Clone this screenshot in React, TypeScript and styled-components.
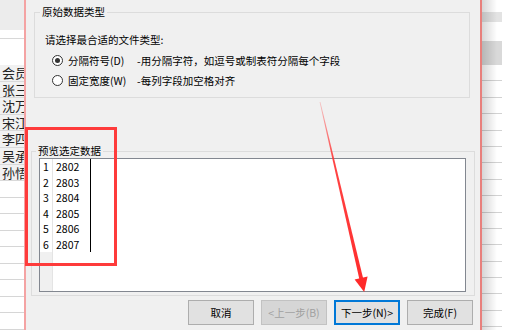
import styled, { createGlobalStyle, css } from "styled-components";

const GlobalStyle = createGlobalStyle`
  html, body {
    margin: 0;
    padding: 0;
    background: #ffffff;
  }
`;

const Screen = styled.div`
  position: relative;
  display: flex;
  width: 508px;
  height: 330px;
  overflow: hidden;
  background: #ffffff;
  font-family: "Noto Sans CJK SC", "Noto Sans", sans-serif;
  color: #000;
`;

/* spreadsheet peeking out on the left */
const LeftSheet = styled.div`
  flex: none;
  width: 24px;
  display: flex;
  flex-direction: column;
  overflow: hidden;
`;

const Band = styled.div<{ $h: number; $bg?: string; $line?: boolean }>`
  flex: none;
  box-sizing: border-box;
  height: ${(p) => p.$h}px;
  background: ${(p) => p.$bg ?? "#ffffff"};
  border-bottom: ${(p) => (p.$line ? "1px solid #d8d8d8" : "none")};
`;

const NameCell = styled.div`
  flex: none;
  box-sizing: border-box;
  height: 16.6px;
  padding-left: 2px;
  overflow: hidden;
  background: #f1f1f1;
  border-bottom: 1px solid #d9d9d9;
  font-size: 13px;
  line-height: 16px;
  white-space: nowrap;
  color: #222;
`;

const SheetLine = styled.div`
  flex: none;
  box-sizing: border-box;
  height: 16.5px;
  border-bottom: 1px solid #d6d6d6;
`;

/* the wizard dialog */
const Dialog = styled.div`
  flex: none;
  box-sizing: border-box;
  width: 458px;
  padding-top: 6px;
  display: flex;
  flex-direction: column;
  background: #f0f0f0;
  border-left: 2px solid #f4a3a3;
  border-right: 2px solid #e8807c;
  font-size: 10.5px;
`;

const GroupBox = styled.fieldset<{ $margin: string; $pad: string }>`
  margin: ${(p) => p.$margin};
  padding: ${(p) => p.$pad};
  min-width: 0;
  border: 1px solid #dcdcdc;
`;

const GroupTitle = styled.legend<{ $shift: number }>`
  margin-left: ${(p) => p.$shift}px;
  padding: 0 2px;
  font-size: 10.5px;
  line-height: 12px;
`;

const Intro = styled.div`
  height: 20px;
  line-height: 20px;
`;

const OptionRow = styled.label`
  display: grid;
  grid-template-columns: 16px 69px auto;
  align-items: center;
  height: 20px;
  padding-left: 7px;
  white-space: nowrap;
`;

const Radio = styled.span<{ $checked?: boolean }>`
  box-sizing: border-box;
  width: 11px;
  height: 11px;
  border-radius: 50%;
  border: 1px solid #333;
  background: #fff;
  display: flex;
  align-items: center;
  justify-content: center;
  &::after {
    content: "";
    width: 5px;
    height: 5px;
    border-radius: 50%;
    background: ${(p) => (p.$checked ? "#333" : "transparent")};
  }
`;

const Preview = styled.div`
  box-sizing: border-box;
  height: 134px;
  display: flex;
  align-items: stretch;
  background: #ffffff;
  border: 1px solid #828790;
`;

const Gutter = styled.div`
  box-sizing: border-box;
  width: 13px;
  display: flex;
  flex-direction: column;
  background: #f0f0f0;
  border-right: 1px solid #e4e4e4;
`;

const LineNo = styled.div`
  height: 15.5px;
  line-height: 15.5px;
  text-align: center;
  background: #ffffff;
`;

const DataCol = styled.div`
  box-sizing: border-box;
  align-self: flex-start;
  width: 38px;
  padding-left: 3px;
  border-right: 1px solid #000;
`;

const DataCell = styled.div`
  height: 15.5px;
  line-height: 15.5px;
`;

const ButtonBar = styled.div`
  display: flex;
  justify-content: flex-end;
  gap: 7px;
  margin: 4px 7px 0 0;
`;

const DlgButton = styled.button<{ $primary?: boolean }>`
  box-sizing: border-box;
  width: 66px;
  height: 25px;
  padding: 0;
  font-family: inherit;
  font-size: 10.5px;
  color: #000;
  background: #e1e1e1;
  border: 1px solid #adadad;
  ${(p) =>
    p.$primary &&
    css`
      border: 2px solid #0078d7;
    `}
  &:disabled {
    background: #d6d6d6;
    border-color: #c2c2c2;
    color: #a0a0a0;
  }
`;

/* spreadsheet on the right, under the dialog shadow */
const RightSheet = styled.div`
  position: relative;
  flex: none;
  width: 20px;
  display: flex;
  flex-direction: column;
  overflow: hidden;
  border-top-right-radius: 4px;
  &::after {
    content: "";
    position: absolute;
    inset: 0;
    background: linear-gradient(to right, rgba(0, 0, 0, 0.16), rgba(0, 0, 0, 0) 15px);
  }
`;

const RightRow = styled.div`
  flex: none;
  box-sizing: border-box;
  height: 16.4px;
  border-bottom: 1px solid #d2d2d2;
`;

/* red markup drawn over the screenshot */
const Highlight = styled.div`
  position: absolute;
  left: 25px;
  top: 127px;
  width: 92px;
  height: 139px;
  box-sizing: border-box;
  border: 3px solid #fe3b3b;
  pointer-events: none;
`;

const ArrowLayer = styled.svg`
  position: absolute;
  left: 0;
  top: 0;
  pointer-events: none;
`;

const names = ["会员", "张三", "沈万", "宋江", "李四", "吴承", "孙悟"];
const rows = ["2802", "2803", "2804", "2805", "2806", "2807"];

export default function App() {
  return (
    <>
      <GlobalStyle />
      <Screen>
        <LeftSheet>
          <Band $h={30} $bg="#ececec" />
          <Band $h={9} $line />
          <Band $h={26} />
          {names.map((n) => (
            <NameCell key={n}>{n}</NameCell>
          ))}
          {Array.from({ length: 9 }, (_, i) => (
            <SheetLine key={i} />
          ))}
        </LeftSheet>

        <Dialog>
          <GroupBox $margin="0 10px 0 8px" $pad="12px 10px 7px 10px">
            <GroupTitle $shift={-5}>原始数据类型</GroupTitle>
            <Intro>请选择最合适的文件类型:</Intro>
            <OptionRow>
              <Radio $checked />
              <span>分隔符号(D)</span>
              <span>-用分隔字符，如逗号或制表符分隔每个字段</span>
            </OptionRow>
            <OptionRow>
              <Radio />
              <span>固定宽度(W)</span>
              <span>-每列字段加空格对齐</span>
            </OptionRow>
          </GroupBox>

          <GroupBox $margin="47px 5px 0 5px" $pad="1px 8px 3px 7px">
            <GroupTitle $shift={-3}>预览选定数据</GroupTitle>
            <Preview>
              <Gutter>
                {rows.map((_, i) => (
                  <LineNo key={i}>{i + 1}</LineNo>
                ))}
              </Gutter>
              <DataCol>
                {rows.map((r) => (
                  <DataCell key={r}>{r}</DataCell>
                ))}
              </DataCol>
            </Preview>
          </GroupBox>

          <ButtonBar>
            <DlgButton>取消</DlgButton>
            <DlgButton disabled>&lt;上一步(B)</DlgButton>
            <DlgButton $primary>下一步(N)&gt;</DlgButton>
            <DlgButton>完成(F)</DlgButton>
          </ButtonBar>
        </Dialog>

        <RightSheet>
          <Band $h={12} />
          <Band $h={10} $bg="#e3e3e3" />
          <Band $h={19} />
          <Band $h={24} $bg="#d9d9d9" />
          {Array.from({ length: 16 }, (_, i) => (
            <RightRow key={i} />
          ))}
        </RightSheet>

        <Highlight />
        <ArrowLayer width="508" height="330" viewBox="0 0 508 330">
          <defs>
            <linearGradient id="shaft" gradientUnits="userSpaceOnUse" x1="320" y1="102" x2="364" y2="292">
              <stop offset="0" stopColor="#ff3b3b" stopOpacity="0.25" />
              <stop offset="0.3" stopColor="#ff3030" stopOpacity="0.9" />
              <stop offset="1" stopColor="#ff2a2a" />
            </linearGradient>
          </defs>
          <polygon points="319.6,102 320.4,102 363.4,279.5 359.6,280.3" fill="url(#shaft)" />
          <polygon points="354.6,279.6 367.6,276.6 364.2,292" fill="#ff2a2a" />
        </ArrowLayer>
      </Screen>
    </>
  );
}
